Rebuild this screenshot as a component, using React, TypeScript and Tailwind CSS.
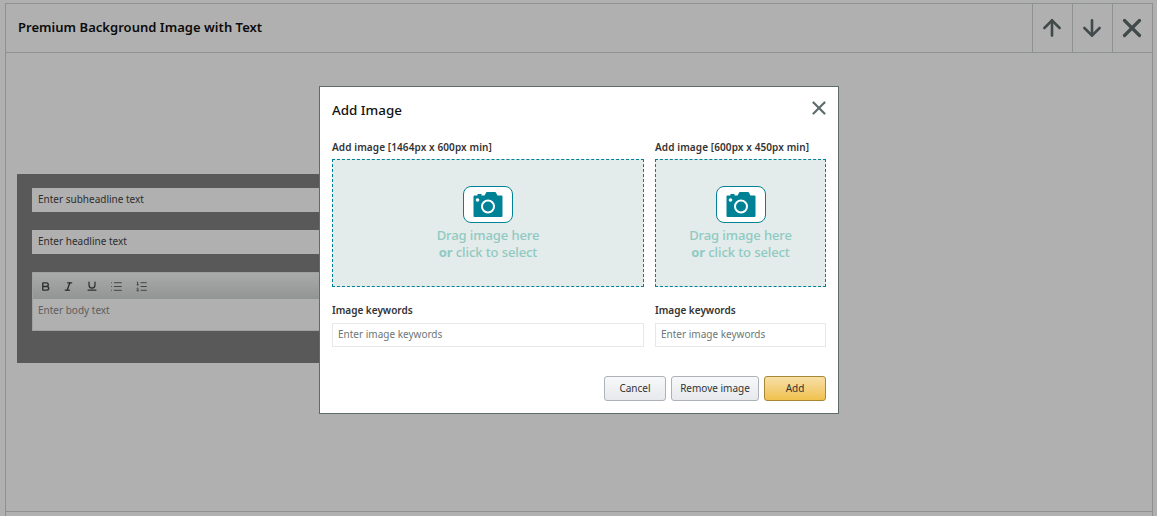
import { ArrowDown, ArrowUp, Bold, Italic, List, ListOrdered, Underline, X } from 'lucide-react'

const font = { fontFamily: '"Noto Sans", sans-serif' }

function CameraIcon() {
  return (
    <div className="flex h-[37px] w-[50px] items-center justify-center rounded-[8px] border border-[#008296] bg-white">
      <svg width="30" height="25" viewBox="0 0 30 25">
        <path
          d="M1.5 3.5h3V2h4v1.5h3l2-3.500h9l2 3.500h4a1 1 0 0 1 1 1V24a1 1 0 0 1-1 1H1.5a1 1 0 0 1-1-1V4.500a1 1 0 0 1 1-1z"
          fill="#008296"
        />
        <circle cx="15" cy="14.500" r="6" fill="none" stroke="#fff" strokeWidth="2" />
        <circle cx="4.500" cy="8" r="1.800" fill="#fff" />
      </svg>
    </div>
  )
}

function ImageColumn({ label, width }: { label: string; width: string }) {
  return (
    <div className={`flex flex-col ${width}`}>
      <label className="mb-[5px] h-[13px] text-[10px] leading-[13px] font-semibold tracking-[0.1px] text-[#333]">{label}</label>
      <div className="flex h-[128px] flex-col items-center border border-dashed border-[#008296] bg-[#e3ebeb] pt-[26px]">
        <CameraIcon />
        <p className="mt-[4px] text-center text-[13px] leading-[17px] font-medium tracking-[-0.1px] text-[#8fcac2]">
          Drag image here
          <br />
          <span className="font-bold">or</span> click to select
        </p>
      </div>
      <label className="mt-[17px] mb-[6px] h-[13px] text-[10px] leading-[13px] font-semibold text-[#333]">
        Image keywords
      </label>
      <input
        placeholder="Enter image keywords"
        className="h-[24px] border border-[#e7e9e9] px-[5px] pb-[2px] text-[10px] outline-none placeholder:text-[#6c7778]"
      />
    </div>
  )
}

function HeaderButton({ children }: { children: React.ReactNode }) {
  return <button className="flex w-10 items-center justify-center border-l border-[#ccd3d3] pr-[1px] text-[#5f6c6c]">{children}</button>
}

export default function App() {
  return (
    <div className="relative h-[516px] w-[1157px] overflow-hidden bg-white" style={font}>
      <div className="mt-[3px] mr-[4px] ml-[5px] flex h-[520px] flex-col border border-b-0 border-[#ccd3d3]">
        <div className="flex h-[49px] shrink-0 items-center justify-between border-b border-[#ccd3d3]">
          <h2 className="pl-3 text-[13px] font-semibold tracking-[0.03px] text-[#111]">Premium Background Image with Text</h2>
          <div className="flex h-full">
            <HeaderButton><ArrowUp size={26} strokeWidth={2.4} /></HeaderButton>
            <HeaderButton><ArrowDown size={26} strokeWidth={2.4} /></HeaderButton>
            <HeaderButton><X size={30} strokeWidth={2.6} /></HeaderButton>
          </div>
        </div>
        <div className="h-[459px] shrink-0 border-b border-[#ccd3d3] px-[11px] pt-[121px]">
          <div className="flex h-[189px] w-[500px] flex-col gap-[18px] bg-[#818181] px-[15px] pt-[14px]">
            <div className="flex h-[24px] items-center bg-white px-[6px] pb-[2px] text-[10px] text-[#444]">Enter subheadline text</div>
            <div className="flex h-[24px] items-center bg-white px-[6px] pb-[2px] text-[10px] text-[#444]">Enter headline text</div>
            <div className="h-[59px] border border-[#e7e9e9] bg-white">
              <div className="flex h-[26px] items-center gap-[12px] bg-gradient-to-b from-[#f5f6f6] to-[#d5d8d8] px-[7px] text-[#444]">
                <Bold size={11} strokeWidth={3} />
                <Italic size={11} strokeWidth={3} />
                <Underline size={12} strokeWidth={2.500} />
                <List size={13} strokeWidth={1.500} />
                <ListOrdered size={13} strokeWidth={1.500} />
              </div>
              <div className="px-[5px] pt-[4px] text-[10px] text-[#8a8a8a]">Enter body text</div>
            </div>
          </div>
        </div>
      </div>

      <div className="absolute inset-0 bg-black/[0.31]" />

      <div className="absolute top-[86px] left-[319px] h-[328px] w-[520px] border border-[#5f6c6c] bg-white px-3">
        <div className="relative flex h-[47px] items-center justify-between pb-[1px]">
          <h3 className="text-[13.400px] font-medium text-[#111]">Add Image</h3>
          <button className="absolute top-[10px] right-[-4px] text-[#5f6c6c]"><X size={22} strokeWidth={2.400} /></button>
        </div>
        <div className="mt-[7px] flex justify-between">
          <ImageColumn label="Add image [1464px x 600px min]" width="w-[312px]" />
          <ImageColumn label="Add image [600px x 450px min]" width="w-[171px]" />
        </div>
        <div className="mt-[29px] flex justify-end gap-[5px]">
          <button className="h-[25px] w-[62px] rounded-[3px] border border-[#adb1b8] bg-gradient-to-b from-[#f7f8fa] to-[#e7e9ec] text-[10px] text-[#333]">Cancel</button>
          <button className="h-[25px] w-[88px] rounded-[3px] border border-[#adb1b8] bg-gradient-to-b from-[#f7f8fa] to-[#e7e9ec] text-[10px] text-[#333]">Remove image</button>
          <button className="h-[25px] w-[62px] rounded-[3px] border border-[#a88734] bg-gradient-to-b from-[#f7dfa5] to-[#f0c14b] text-[10px] text-[#333]">Add</button>
        </div>
      </div>
    </div>
  )
}
